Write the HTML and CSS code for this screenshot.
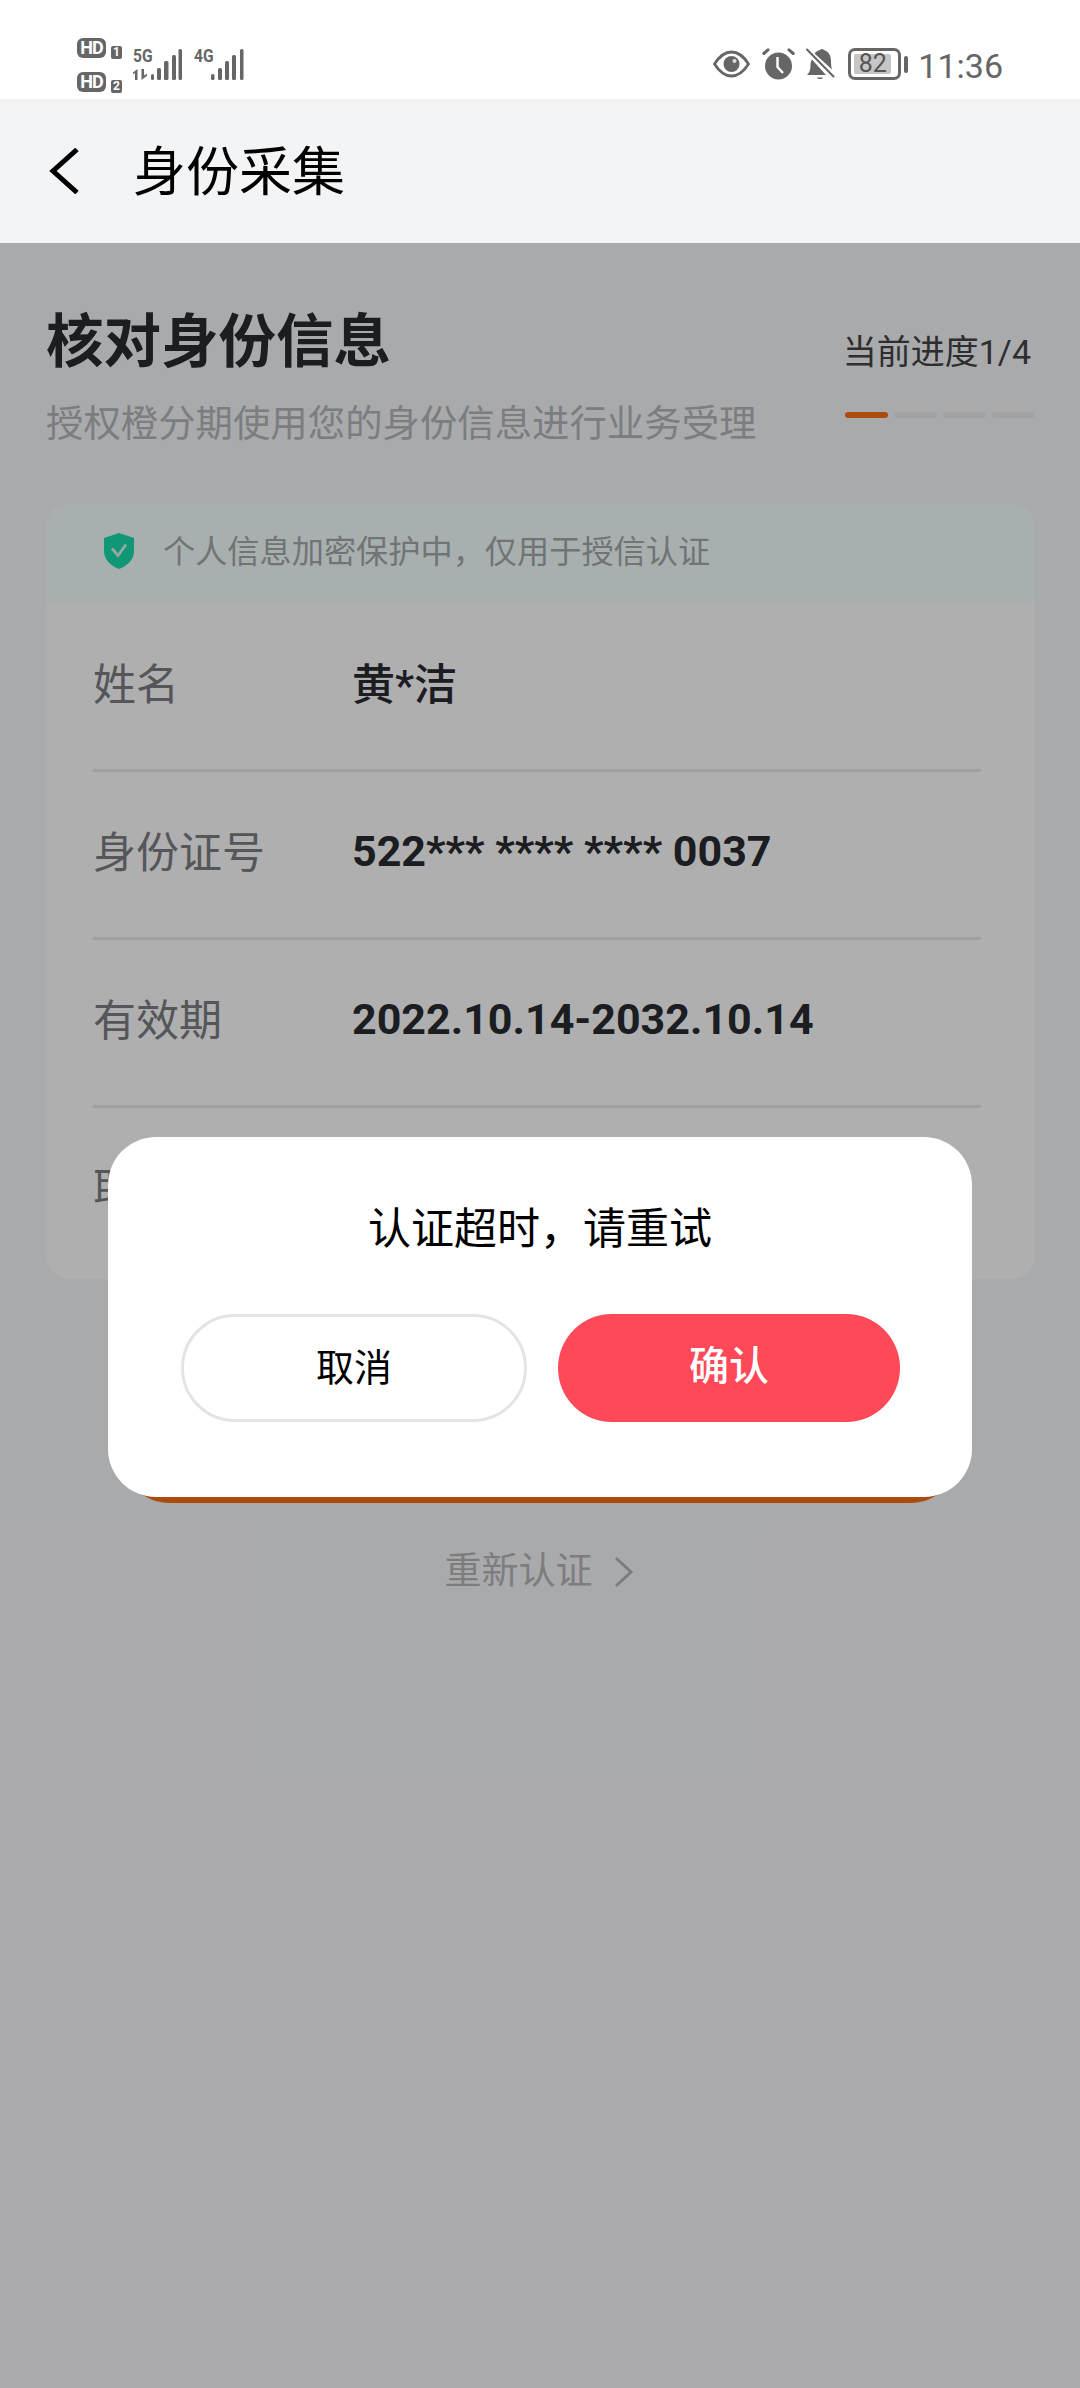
FILE: index.html
```html
<!DOCTYPE html>
<html lang="zh-CN">
  <head>
    <meta charset="utf-8" />
    <title>身份采集</title>
    <link rel="stylesheet" href="styles.css">
  </head>
  <body>
    <div class="phone">
      <div class="status-bar">
        <div class="status-left">
          <div class="hd-col">
            <div class="hd-row"><span class="hd-badge">HD</span><span class="sim-num">1</span></div>
            <div class="hd-row"><span class="hd-badge">HD</span><span class="sim-num">2</span></div>
          </div>
          <div class="net net--first">
            <div class="net__labels">
              <span class="net__gen">5G</span>
              <svg class="net__arrows" width="16" height="11" viewBox="0 0 16 11">
                <path d="M4.500 0v11h-2.500V4L0 5.200V3.400zM8.500 0h2.500v6.500l3-1.700v1.900L8.500 11z" fill="#666"/>
              </svg>
            </div>
            <svg width="31" height="31" viewBox="0 0 31 31">
              <rect x="0" y="25" width="3" height="6" rx="1.500" fill="#666"/>
              <rect x="6" y="19" width="4" height="12" rx="1.500" fill="#666"/>
              <rect x="13" y="12" width="4.500" height="19" rx="1.500" fill="#666"/>
              <rect x="21" y="6" width="4" height="25" rx="1.500" fill="#666"/>
              <rect x="27.500" y="0" width="3.500" height="31" rx="1.500" fill="#666"/>
            </svg>
          </div>
          <div class="net net--second">
            <div class="net__labels">
              <span class="net__gen">4G</span>
            </div>
            <svg width="33" height="31" viewBox="0 0 33 31">
              <rect x="0" y="25" width="3.500" height="6" rx="1.500" fill="#666"/>
              <rect x="7" y="19" width="4" height="12" rx="1.500" fill="#666"/>
              <rect x="14" y="12" width="4" height="19" rx="1.500" fill="#666"/>
              <rect x="21" y="6" width="4" height="25" rx="1.500" fill="#666"/>
              <rect x="29" y="0" width="3.500" height="31" rx="1.500" fill="#666"/>
            </svg>
          </div>
        </div>
        <div class="status-right">
          <svg class="icon-eye" width="37" height="28" viewBox="0 0 37 28">
            <path d="M1.500 14C6.500 6 12 2 18.500 2s12 4 17 12c-5 8-10.500 12-17 12s-12-4-17-12z" fill="none" stroke="#666" stroke-width="2.800"/>
            <circle cx="18.500" cy="14" r="8" fill="#666"/>
            <circle cx="21.500" cy="11" r="2" fill="#ddd"/>
          </svg>
          <svg class="icon-alarm" width="33" height="32" viewBox="0 0 33 32">
            <circle cx="16.500" cy="18" r="13.500" fill="#666"/>
            <path d="M15.500 9v10l5.500 6" fill="none" stroke="#fff" stroke-width="2.400"/>
            <path d="M1.800 5.500 6 1.800M31.200 5.500 27 1.800" fill="none" stroke="#666" stroke-width="3" stroke-linecap="round"/>
          </svg>
          <svg class="icon-bell" width="29" height="32" viewBox="0 0 29 32">
            <path d="M1 27c3-3 3.500-6 3.500-10 0-2 .5-4 1.500-5.500L20 27z" fill="#666"/>
            <path d="M8.500 5.500C10 3.500 12 2.500 14 2c1-1.500 3-1.500 4 0 5 1.500 7 6 7 11 0 3 .3 6 1 8.500z" fill="#666"/>
            <path d="M11 29.500h6c-.5 2-5.500 2-6 0z" fill="#666"/>
            <path d="M1.500 1.500 27.500 28" fill="none" stroke="#fff" stroke-width="3.600"/>
            <path d="M1 1.500 27.500 28.500" fill="none" stroke="#666" stroke-width="2" stroke-linecap="round"/>
          </svg>
          <div class="battery">
            <div class="battery__case">
              <span class="battery__level">82</span>
            </div>
            <span class="battery__nub"></span>
          </div>
          <span class="status-time">11:36</span>
        </div>
      </div>

      <div class="nav-bar">
        <svg class="nav-bar__back" width="32" height="46" viewBox="0 0 32 46">
          <path d="M29 1.500 5 23l24 21.500" fill="none" stroke="#000" stroke-width="5"/>
        </svg>
        <span class="nav-bar__title">身份采集</span>
      </div>

      <div class="content">
        <div class="heading">
          <div class="heading__main">
            <h1 class="heading__title">核对身份信息</h1>
            <p class="heading__sub">授权橙分期使用您的身份信息进行业务受理</p>
          </div>
          <div class="progress">
            <span class="progress__text">当前进度1/4</span>
            <div class="progress__bars">
              <span class="progress__bar active"></span>
              <span class="progress__bar"></span>
              <span class="progress__bar"></span>
              <span class="progress__bar"></span>
            </div>
          </div>
        </div>

        <div class="card">
          <div class="card__notice">
            <svg width="32" height="36" viewBox="0 0 32 36">
              <path d="M16 0 31 5v13c0 9-7 15-15 18C8 33 1 27 1 18V5z" fill="#16d9a9"/>
              <path d="M9 15.500l6 7 8-11" fill="none" stroke="#d8f0ea" stroke-width="2.800"/>
            </svg>
            <span class="card__notice-text">个人信息加密保护中，仅用于授信认证</span>
          </div>
          <div class="card__row">
            <span class="card__label">姓名</span>
            <span class="card__value name">黄*洁</span>
          </div>
          <div class="card__row">
            <span class="card__label">身份证号</span>
            <span class="card__value">522*** **** **** 0037</span>
          </div>
          <div class="card__row">
            <span class="card__label">有效期</span>
            <span class="card__value">2022.10.14-2032.10.14</span>
          </div>
          <div class="card__row">
            <span class="card__label">取证机关</span>
          </div>
        </div>

        <div class="submit-btn"></div>
        <div class="retry">
          <span>重新认证</span>
          <svg width="20" height="32" viewBox="0 0 20 32">
            <path d="M2 2 17 16 2 30" fill="none" stroke="#b3b4b8" stroke-width="3"/>
          </svg>
        </div>

        <div class="mask">
          <div class="dialog">
            <p class="dialog__msg">认证超时，请重试</p>
            <div class="dialog__actions">
              <div class="dialog__btn cancel">取消</div>
              <div class="dialog__btn confirm">确认</div>
            </div>
          </div>
        </div>
      </div>
    </div>
  </body>
</html>
```

FILE: styles.css
```css
* {
  box-sizing: border-box;
}

html,
body {
  margin: 0;
  padding: 0;
}

body {
  font-family: Roboto, "Noto Sans CJK SC", sans-serif;
}

.phone {
  width: 1080px;
  height: 2388px;
  overflow: hidden;
  background: #f3f4f6;
  display: flex;
  flex-direction: column;
}

/* status bar */
.status-bar {
  height: 99px;
  background: #fff;
  display: flex;
  justify-content: space-between;
  color: #666;
}

.status-left {
  display: flex;
  padding: 38px 0 0 77px;
}

.hd-col {
  display: flex;
  flex-direction: column;
  gap: 14px;
  width: 56px;
}

.hd-row {
  display: flex;
  align-items: flex-end;
  gap: 5px;
  height: 20px;
}

.hd-badge {
  width: 29px;
  height: 20px;
  background: #666;
  color: #fff;
  border-radius: 6px;
  font-size: 18px;
  line-height: 20px;
  font-weight: 700;
  text-align: center;
  letter-spacing: -1px;
}

.sim-num {
  width: 11px;
  height: 13px;
  margin-bottom: -1px;
  background: #666;
  color: #fff;
  border-radius: 2px;
  font-size: 12px;
  line-height: 13px;
  font-weight: 700;
  text-align: center;
}

.net {
  display: flex;
  padding-top: 11px;
  height: 42px;
}

.net--second {
  margin-left: 12px;
}

.net__labels {
  width: 18px;
  display: flex;
  flex-direction: column;
  gap: 6px;
}

.net--second .net__labels {
  width: 17px;
}

.net__gen {
  font-size: 19px;
  line-height: 14px;
  font-weight: 700;
  transform: scaleX(.82);
  transform-origin: left center;
  white-space: nowrap;
}

.net__arrows {
  display: block;
}

.status-right {
  display: flex;
  padding: 48px 77px 0 0;
}

.icon-eye {
  margin: 2px 12px 0 0;
}

.icon-alarm {
  margin-right: 11px;
}

.icon-bell {
  margin-right: 13px;
}

.battery {
  display: flex;
  align-items: center;
  height: 32px;
  margin-right: 10px;
}

.battery__case {
  width: 53px;
  height: 32px;
  padding: 3px;
  border: 3px solid #666;
  border-radius: 7px;
}

.battery__level {
  display: block;
  width: 37px;
  height: 20px;
  background: #c6c6c6;
  border-radius: 2px;
  color: #555;
  font-size: 25px;
  line-height: 20px;
  text-align: center;
}

.battery__nub {
  width: 4px;
  height: 17px;
  margin-left: 3px;
  background: #666;
  border-radius: 2px;
}

.status-time {
  font-size: 34px;
  line-height: 30px;
  margin-top: 3px;
}

/* nav */
.nav-bar {
  height: 144px;
  background: #f3f4f6;
  display: flex;
  align-items: center;
  padding-left: 48px;
}

.nav-bar__back {
  margin-right: 53px;
}

.nav-bar__title {
  font-size: 53px;
  line-height: 60px;
  margin-top: 3px;
  color: #000;
}

/* page body */
.content {
  flex: 1;
  position: relative;
  padding: 67px 45px 0 46px;
}

.heading {
  display: flex;
  justify-content: space-between;
}

.heading__title {
  margin: 0;
  font-size: 57.500px;
  line-height: 66px;
  font-weight: 700;
  color: #282a30;
}

.heading__sub {
  margin: 23px 0 0;
  font-size: 37.400px;
  line-height: 50px;
  color: #b2b3b6;
}

.progress {
  display: flex;
  flex-direction: column;
  align-items: flex-end;
  padding-top: 18px;
}

.progress__text {
  margin-right: 4px;
  font-size: 34px;
  line-height: 48px;
  color: #424244;
}

.progress__bars {
  display: flex;
  gap: 6px;
  margin-top: 36px;
}

.progress__bar {
  width: 43px;
  height: 6px;
  border-radius: 3px;
  background: #e8e8e8;
}

.progress__bar.active {
  background: #f56c12;
}

.card {
  margin-top: 55px;
  height: 775px;
  background: #fbfbfb;
  border-radius: 24px;
  overflow: hidden;
}

.card__notice {
  height: 100px;
  background: #f1fdfb;
  display: flex;
  align-items: center;
  gap: 28px;
  padding: 0 0 6px 57px;
  font-size: 32.200px;
  color: #a3a6a8;
}

.card__notice-text {
  margin-bottom: 4px;
}

.card__row {
  height: 168px;
  margin: 0 54px 0 47px;
  border-bottom: 3px solid #e6e6e6;
  display: flex;
  align-items: center;
  padding-bottom: 8px;
}

.card__row:last-child {
  border-bottom: 0;
}

.card__label {
  width: 259px;
  margin-bottom: 4px;
  font-size: 43px;
  color: #7a7b80;
}

.card__value {
  font-size: 43px;
  font-weight: 700;
  color: #282a30;
}

.card__value.name {
  margin-bottom: 4px;
  font-weight: 500;
}

.submit-btn {
  height: 100px;
  margin: 124px 75px 0 74px;
  background: #f56c12;
  border-radius: 50px;
}

.retry {
  display: flex;
  justify-content: center;
  align-items: center;
  gap: 21px;
  margin-top: 43px;
  padding-right: 3px;
  font-size: 37px;
  line-height: 52px;
  color: #b3b4b8;
}

/* dialog */
.mask {
  position: absolute;
  top: 0;
  left: 0;
  right: 0;
  bottom: 0;
  background: rgba(0, 0, 0, 0.3);
  padding: 894px 108px 0;
}

.dialog {
  height: 360px;
  background: #fff;
  border-radius: 48px;
  padding-top: 62px;
}

.dialog__msg {
  margin: 0;
  font-size: 43px;
  line-height: 60px;
  color: #000;
  text-align: center;
}

.dialog__actions {
  display: flex;
  margin-top: 55px;
  padding-left: 73px;
  gap: 31px;
}

.dialog__btn {
  height: 108px;
  border-radius: 54px;
  display: flex;
  align-items: center;
  justify-content: center;
}

.dialog__btn.cancel {
  width: 346px;
  border: 3px solid #e4e4e4;
  padding-bottom: 7px;
  font-size: 38px;
  color: #000;
}

.dialog__btn.confirm {
  width: 342px;
  background: #ff4858;
  font-size: 40px;
  font-weight: 500;
  color: #fff;
  padding-bottom: 10px;
}
```
